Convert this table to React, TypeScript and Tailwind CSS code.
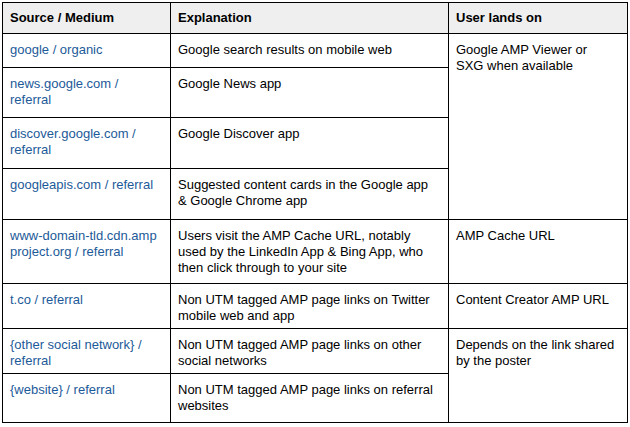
const link = 'text-[#1c5a99]'

type Row = { src: string[]; exp: string[]; lands?: string[]; span?: number; h: number }

const rows: Row[] = [
  { src: ['google / organic'], exp: ['Google search results on mobile web'], lands: ['Google AMP Viewer or', 'SXG when available'], span: 4, h: 34 },
  { src: ['news.google.com /', 'referral'], exp: ['Google News app'], h: 50 },
  { src: ['discover.google.com /', 'referral'], exp: ['Google Discover app'], h: 51 },
  { src: ['googleapis.com / referral'], exp: ['Suggested content cards in the Google app', '& Google Chrome app'], h: 51 },
  { src: ['www-domain-tld.cdn.amp', 'project.org / referral'], exp: ['Users visit the AMP Cache URL, notably', 'used by the LinkedIn App & Bing App, who', 'then click through to your site'], lands: ['AMP Cache URL'], span: 1, h: 64 },
  { src: ['t.co / referral'], exp: ['Non UTM tagged AMP page links on Twitter', 'mobile web and app'], lands: ['Content Creator AMP URL'], span: 1, h: 45 },
  { src: ['{other social network} /', 'referral'], exp: ['Non UTM tagged AMP page links on other', 'social networks'], lands: ['Depends on the link shared', 'by the poster'], span: 2, h: 45 },
  { src: ['{website} / referral'], exp: ['Non UTM tagged AMP page links on referral', 'websites'], h: 49 },
]

function Lines({ lines }: { lines: string[] }) {
  return (
    <>
      {lines.map((l, i) => (
        <div key={i} className="whitespace-nowrap">{l}</div>
      ))}
    </>
  )
}

export default function App() {
  return (
    <div className="w-[630px] h-[427px] bg-white pt-[2px] pl-[2px] font-['Liberation_Sans',Arial,sans-serif] text-[13px] leading-4 text-black">
      <table className="border-collapse table-fixed w-[625px]">
        <colgroup>
          <col className="w-[168px]" />
          <col className="w-[278px]" />
          <col className="w-[179px]" />
        </colgroup>
        <thead>
          <tr className="h-[31px] bg-[#efefef] font-bold">
            <th className="border border-black px-[7px] text-left align-middle">Source / Medium</th>
            <th className="border border-black px-[7px] text-left align-middle">Explanation</th>
            <th className="border border-black px-[7px] text-left align-middle">User lands on</th>
          </tr>
        </thead>
        <tbody>
          {rows.map((r, i) => (
            <tr key={i} style={{ height: r.h }}>
              <td className={`border border-black px-[7px] pt-[8px] align-top ${link}`}>
                <Lines lines={r.src} />
              </td>
              <td className="border border-black px-[7px] pt-[8px] align-top">
                <Lines lines={r.exp} />
              </td>
              {r.span && r.lands && (
                <td rowSpan={r.span} className="border border-black px-[7px] pt-[8px] align-top">
                  <Lines lines={r.lands} />
                </td>
              )}
            </tr>
          ))}
        </tbody>
      </table>
    </div>
  )
}
